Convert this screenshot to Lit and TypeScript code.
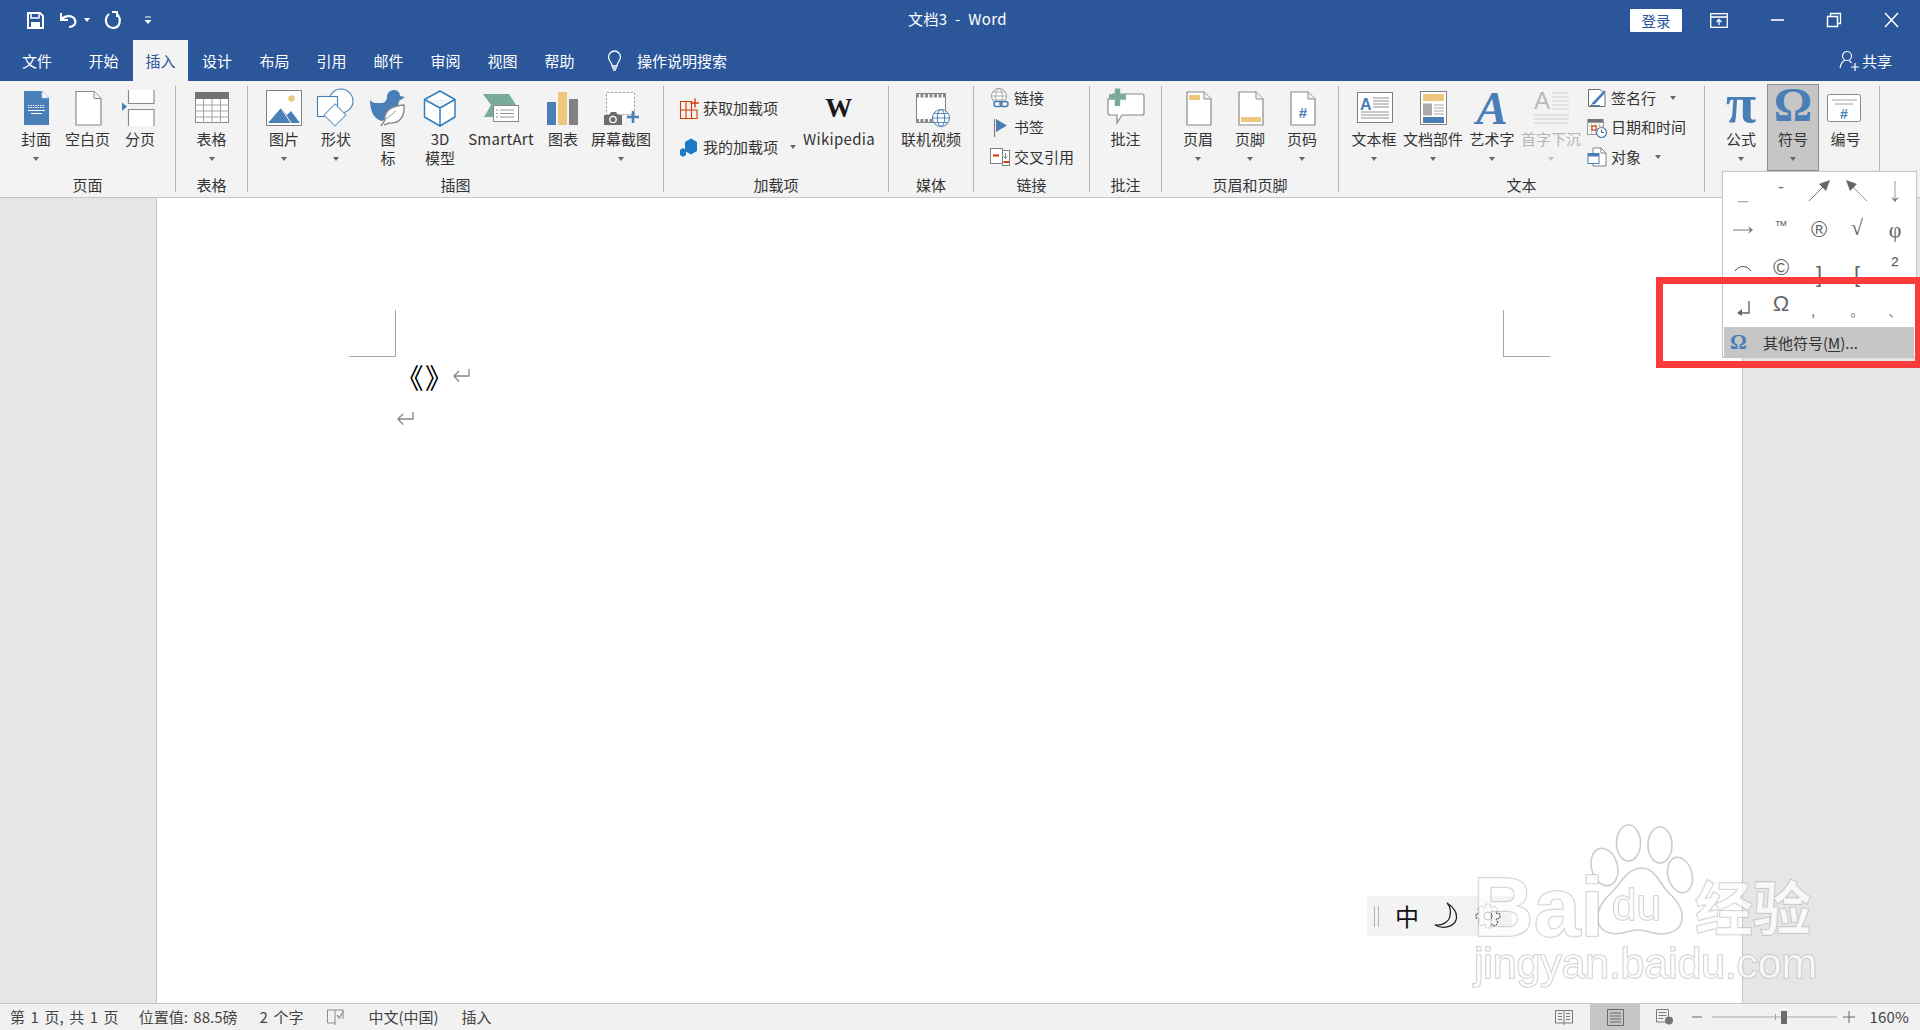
import { LitElement, html, css, svg } from "lit";
import { customElement } from "lit/decorators.js";

const B = "#4a7eb7", O = "#eec77e", G = "#808080", GR = "#7aab9a", R = "#d83b01";
const box = (c: any, w = 40, h = 40) => html`<svg class="ico" width=${w} height=${h} viewBox="0 0 ${w} ${h}">${c}</svg>`;
const page = (x: number, y: number, w: number, h: number) => svg`<path d="M${x} ${y}H${x + w - 7}L${x + w} ${y + 7}V${y + h}H${x}Z" fill="#fff" stroke="#8a8a8a" stroke-width="1.2"/><path d="M${x + w - 7} ${y}V${y + 7}H${x + w}" fill="#f3f3f3" stroke="#8a8a8a" stroke-width="1"/>`;

const I: Record<string, any> = {
  cover: box(svg`<path d="M8 3H26L33 10V37H8Z" fill="${B}"/><path d="M26 3V10H33Z" fill="#fff" stroke="#a8bfd8" stroke-width=".8"/><path d="M12 17.5H29M12 19.5H29" stroke="#fff" stroke-dasharray="1.4 1"/><path d="M12 22.5H29M15 25.5H26" stroke="#fff"/>`),
  blank: box(page(8, 3.5, 25, 33.5)),
  pbreak: box(svg`<path d="M8.5 2V15.5H34V2" fill="#fff" stroke="#8a8a8a" stroke-width="1.2"/><path d="M8.5 38V21.5H34V38" fill="#fff" stroke="#8a8a8a" stroke-width="1.2"/><path d="M2 14.5L7 18.5L2 23Z" fill="${B}"/>`),
  table: box(svg`<rect x="3.5" y="4.5" width="33" height="30" fill="#fff" stroke="#8a8a8a"/><rect x="3" y="4" width="34" height="7" fill="#737373"/><path d="M3 17H37M3 23H37M3 29H37M11.5 11V35M20 11V35M28.5 11V35" stroke="#a5a5a5"/>`),
  pic: box(svg`<rect x="2.5" y="2.5" width="35" height="35" fill="#fff" stroke="#808080"/><circle cx="27.5" cy="10.5" r="3.2" fill="${O}"/><path d="M4 35L17 20L23 27L27 23L36 35Z" fill="${B}"/><path d="M17 20L27 35" stroke="#fff"/>`),
  shapes: box(svg`<circle cx="25" cy="13" r="12" fill="#fff" stroke="${B}" stroke-width="1.1"/><rect x="1.5" y="8.5" width="20" height="20" fill="#fff" stroke="${B}" stroke-width="1.1"/><path d="M19 16L30 27L19 38L8 27Z" fill="#fff" stroke="#7aa0c8" stroke-width="1.1"/>`),
  icons: box(svg`<path d="M2 12C5 16 8 15 13 15C16 15 19 13 19 9C19 5 22 2 26 2C30 2 32 5 32 8L37 9L31 13C30 20 27 24 24 26C19 28 16 33 14 33C7 32 2 24 2 12Z" fill="${B}"/><path d="M13 38L17 32C16 23 23 18 36 17C37 28 32 36 21 35L16 37" fill="#fff" stroke="#8a8a8a" stroke-width="1.4"/><path d="M17 32L28 23" stroke="#a0a0a0"/>`),
  cube: box(svg`<path d="M20 3L35 11.5V29L20 38L4.5 29V11.5ZM4.5 11.5L20 20L35 11.5M20 20V38" fill="#fff" stroke="#2f7fc1" stroke-width="1.5" stroke-linejoin="round"/>`),
  smart: box(svg`<path d="M2 6H28L35 17L32 29H3L10 17Z" fill="${GR}"/><rect x="12.5" y="17.5" width="25" height="16" fill="#fff" stroke="#8a8a8a"/><path d="M19 22H33M19 25.5H33M19 29H33M15 22H17M15 25.5H17M15 29H17" stroke="#8a8a8a" stroke-width=".9"/>`),
  chart: box(svg`<rect x="4" y="14" width="9" height="23" fill="${B}"/><rect x="15" y="4" width="9" height="33" fill="${O}"/><rect x="26" y="11" width="9" height="26" fill="${G}"/>`),
  shot: box(svg`<rect x="5.5" y="4.5" width="28" height="22" fill="#fff" stroke="#a5a5a5" stroke-dasharray="2.5 1.5"/><path d="M3 27H8L10 24H15L17 27H21V37H3Z" fill="#6d6d6d"/><circle cx="12" cy="31.5" r="3.2" fill="none" stroke="#fff" stroke-width="1.3"/><path d="M26 29H38M32 23V35" stroke="${B}" stroke-width="2.6"/>`),
  film: box(svg`<rect x="5.5" y="5.5" width="29" height="29" fill="#fff" stroke="#808080"/><path d="M5 7.5H35M5 33H35" stroke="#8a8a8a" stroke-width="4" stroke-dasharray="3 1.5"/><circle cx="30" cy="30" r="8.5" fill="#fff" stroke="${B}"/><ellipse cx="30" cy="30" rx="3.7" ry="8.5" fill="none" stroke="${B}"/><path d="M21.5 30H38.5M23 25.5H37M23 34.5H37" stroke="${B}" stroke-width=".9"/>`),
  comment: box(svg`<path d="M6 6H36Q38 6 38 8V25Q38 27 36 27H16L11 35V27H4Q2 27 2 25V10" fill="#fff" stroke="#8a8a8a" stroke-width="1.2"/><path d="M3 9H20M11.5 0.5V18" stroke="${GR}" stroke-width="5.4"/>`),
  header: box(svg`${page(9, 4, 24, 33)}<rect x="11" y="7" width="11" height="5" fill="${O}"/>`),
  footer: box(svg`${page(9, 4, 24, 33)}<rect x="11" y="29" width="20" height="5" fill="${O}"/>`),
  pnum: box(svg`${page(9, 4, 24, 33)}<text x="21" y="30" class="t" font-size="15" text-anchor="middle" fill="${B}" font-weight="700">#</text>`),
  tbox: box(svg`<rect x="3.5" y="4.5" width="35" height="30" fill="#fff" stroke="#808080"/><text x="6" y="22" class="t" font-size="16" font-weight="700" fill="${B}">A</text><path d="M19 10H35M19 13H35M19 16H35M19 19H35M7 24H35M7 27H35M7 30H35" stroke="#8f8f8f"/>`),
  parts: box(svg`<rect x="7.5" y="3.5" width="26" height="33" fill="#fff" stroke="#808080"/><rect x="10" y="6" width="21" height="7" fill="${O}"/><rect x="10" y="15.5" width="9" height="12" fill="#aaa"/><path d="M21 17H31M21 20H31M21 23H31M21 26H31" stroke="#a5a5a5"/><rect x="10" y="29" width="21" height="6" fill="${B}"/>`),
  art: box(svg`<text x="20" y="36" class="s" font-size="47" font-weight="700" font-style="italic" text-anchor="middle" fill="${B}">A</text>`),
  drop: box(svg`<text x="3" y="21" class="t" font-size="24" fill="#b8b8b8">A</text><path d="M21 5H38M21 9H38M21 13H38M21 17H38M21 21H38" stroke="#d2d2d2"/><path d="M3 27H38M3 31H38M3 35H38" stroke="#cfcfcf"/>`),
  pi: box(svg`<text x="20" y="34" class="s" font-size="55" font-weight="700" text-anchor="middle" fill="${B}">π</text>`),
  om: box(svg`<text x="20" y="33" class="s" font-size="48" font-weight="700" text-anchor="middle" fill="${B}">Ω</text>`),
  num: box(svg`<rect x="1.5" y="6.5" width="33" height="27" rx="2" fill="#fff" stroke="#8a8a8a"/><path d="M6 12H31M9 16H27" stroke="#a0a0a0"/><text x="18" y="31" class="t" font-size="14" font-weight="700" text-anchor="middle" fill="${B}">#</text>`),
  addin: box(svg`<path d="M1.5 3.5H12.5V20.5H1.5ZM1.5 12H18V20.5H12.5M7 3.5V20.5" fill="none" stroke="${R}" stroke-width="1.1"/><path d="M11.5 5H20M16 0.5V9.5" stroke="${R}" stroke-width="1.4"/>`, 20, 20),
  myadd: box(svg`<path d="M6 5L12 1.5L18 5V14L12 17.5L6 14Z" fill="#1f78c8"/><path d="M1 13L4 11L7 13V18L4 20L1 18Z" fill="#1f78c8"/>`, 20, 20),
  link: box(svg`<circle cx="9" cy="8" r="7.5" fill="#fff" stroke="#9a9a9a"/><ellipse cx="9" cy="8" rx="3.4" ry="7.5" fill="none" stroke="#9a9a9a" stroke-width=".8"/><path d="M1.5 8H16.5M3 4H15M3 12H15" stroke="#9a9a9a" stroke-width=".8"/><rect x="4" y="13.5" width="8" height="5" rx="2.5" fill="#fff" stroke="${B}" stroke-width="1.5"/><rect x="10" y="13.5" width="8" height="5" rx="2.5" fill="none" stroke="${B}" stroke-width="1.5"/>`, 20, 20),
  mark: box(svg`<path d="M4.5 1V19" stroke="#808080" stroke-width="1.2"/><path d="M6 1L17 7.5L6 14Z" fill="${B}"/>`, 20, 20),
  xref: box(svg`<rect x="0.5" y="1.5" width="12" height="15" fill="#fff" stroke="#808080"/><rect x="12.5" y="3.5" width="7" height="15" fill="#fff" stroke="#808080"/><path d="M3 8.5H9M13.5 15H19" stroke="${R}" stroke-width="2"/><path d="M15.5 6V11M13.5 9.5L15.5 11.5L17.5 9.5" fill="none" stroke="#808080"/>`, 20, 20),
  sig: box(svg`<path d="M1.5 1.5H13L18 6V18.5H1.5Z" fill="#fff" stroke="#6f6f6f"/><path d="M5 15L17 2.5L19 4L8 16L4 17Z" fill="${B}"/><path d="M3 17.5H13" stroke="${B}"/>`, 20, 20),
  date: box(svg`<rect x="0.5" y="1" width="16" height="3.5" fill="#737373"/><rect x="0.5" y="4.5" width="16" height="12" fill="#fff" stroke="#999"/><path d="M4.5 4.5V16M8.5 4.5V16M12.5 4.5V16M.5 8H16M.5 12H16" stroke="#bbb" stroke-width=".8"/><rect x="5" y="8" width="4" height="4" fill="#fff" stroke="${R}" stroke-width="1.2"/><circle cx="14.5" cy="14.5" r="5" fill="#fff" stroke="${B}" stroke-width="1.2"/><path d="M14.5 11.5V14.5H17" fill="none" stroke="#555"/>`, 20, 20),
  obj: box(svg`<path d="M6 1H14L19 6V19H6Z" fill="#fff" stroke="#808080"/><path d="M14 1V6H19" fill="none" stroke="#808080"/><rect x="1" y="6.5" width="11" height="10" fill="#fff" stroke="${B}"/><rect x="1" y="6.5" width="11" height="3" fill="${B}"/>`, 20, 20),
};

const Btn = (icon: any, label: string, w: number, arrow = true, line2 = "", cls = "") => html`
  <div class="btn ${cls}" style="width:${w}px">${icon}<div class="lb">${label}</div>${line2 ? html`<div class="lb">${line2}</div>` : ""}${arrow ? html`<i class="ar"></i>` : ""}</div>`;
const Grp = (w: number, label: string, content: any) => html`
  <section class="grp" style="width:${w}px"><div class="gc">${content}</div><div class="gl">${label}</div></section>`;
const Row = (ic: any, t: string, arrow = false, cls = "") => html`<div class="row ${cls}">${ic}<span>${t}</span>${arrow ? html`<i class="ar"></i>` : ""}</div>`;

const tabs: [string, number][] = [["文件", 74], ["开始", 59], ["插入", 55], ["设计", 58], ["布局", 57], ["引用", 57], ["邮件", 57], ["审阅", 57], ["视图", 57], ["帮助", 57]];
const A = (c: any) => html`<svg width="30" height="30" viewBox="0 0 30 30" fill="none" stroke="#777" stroke-width="1">${c}</svg>`;
const cells: any[] = [
  html`<span class="lo">_</span>`, html`<span class="mi">-</span>`,
  A(svg`<path d="M5 25L22 8"/><path d="M15 8L26 4L22 15Z" fill="#666" stroke="none"/>`),
  A(svg`<path d="M25 25L8 8" stroke="#999"/><path d="M4 4L15 8L8 15Z" fill="#666" stroke="none"/>`),
  A(svg`<path d="M15 5V25" stroke="#999"/><path d="M11 21L15 26L19 21L15 23Z" fill="#777" stroke="none"/>`),
  A(svg`<path d="M5 15H24"/><path d="M20 11L25 15L20 19L22 15Z" fill="#777" stroke="none"/>`), html`<span class="sm">™</span>`, html`<span class="rc">®</span>`, html`<span class="rt">√</span>`, html`<span class="ph">φ</span>`,
  A(svg`<path d="M7 18C11 12 19 12 23 18" stroke="#555"/>`), html`<span class="rc">©</span>`, html`<span class="br">]</span>`, html`<span class="br">[</span>`, html`<span class="sm2">²</span>`,
  A(svg`<path d="M21 9V21H11" stroke="#666" stroke-width="1.4"/><path d="M14 17L9 21L14 24Z" fill="#666" stroke="none"/>`), html`<span class="om">Ω</span>`, html`<span class="pc cm">,</span>`, html`<span class="pc">。</span>`, html`<span class="pc">、</span>`,
];
const Ret = () => html`<svg class="ret" width="17" height="14" viewBox="0 0 17 14" fill="none" stroke="#888" stroke-width="1.3">${svg`<path d="M16 0V7H1M6 2L1 7L6 12.5"/>`}</svg>`;

@customElement("app-root")
export class AppRoot extends LitElement {
  static styles = css`
    :host { display: block; width: 1920px; height: 1030px; position: relative; overflow: hidden; font-family: "Noto Sans CJK SC", "Liberation Sans", sans-serif; font-size: 15px; color: #333; background: #e6e6e6; }
    .t { font-family: "Liberation Sans", sans-serif; }
    .s { font-family: "Liberation Serif", serif; }
    .title { height: 40px; background: #2b579a; color: #fff; display: grid; grid-template-columns: 1fr auto 1fr; align-items: center; }
    .qat { display: flex; align-items: center; padding-left: 25px; }
    .qat svg { display: block; }
    .qat .q2 { margin-left: 13px; } .qat .q3 { margin-left: 6px; } .qat .q4 { margin-left: 13px; } .qat .q5 { margin-left: 20px; }
    .ttl { font-size: 15px; letter-spacing: .4px; white-space: pre; margin-right: 5px; padding-bottom: 4px; }
    .wc { display: flex; align-items: center; justify-content: flex-end; }
    .login { width: 52px; height: 23px; background: #fff; color: #2b579a; border-radius: 1px; display: flex; align-items: center; justify-content: center; font-size: 14.5px; margin-right: 27px; }
    .wc svg { display: block; }
    .wc .m1 { margin-right: 40.5px; } .wc .m2 { margin-right: 41.5px; } .wc .m3 { margin-right: 39.5px; } .wc .m4 { margin-right: 19.5px; }
    .tabs { height: 41px; background: #2b579a; color: #fff; display: flex; }
    .tab { display: flex; align-items: center; justify-content: center; }
    .tab.on { background: #f3f3f3; color: #2b579a; }
    .tell { display: flex; align-items: center; margin-left: 17px; flex: 1; }
    .tell span { margin-left: 13px; }
    .share { display: flex; align-items: center; margin-right: 28px; }
    .share span { margin-left: 2px; }
    .ribbon { height: 116px; background: #f3f3f3; border-bottom: 1px solid #c6c6c6; display: flex; box-sizing: content-box; color: #333; }
    .grp { height: 106px; margin-top: 5px; border-right: 1px solid #b4b4b4; box-sizing: border-box; display: flex; flex-direction: column; padding-top: 2px; }
    .gc { flex: 1; display: flex; min-height: 0; }
    .gl { height: 20px; line-height: 20px; text-align: center; margin-bottom: -3px; white-space: nowrap; }
    .btn { display: flex; flex-direction: column; align-items: center; flex: none; box-sizing: border-box; }
    .ico { display: block; flex: none; overflow: visible; }
    .lb { height: 19px; line-height: 19px; margin-top: .5px; white-space: nowrap; }
    .lb + .lb { margin-top: 0; }
    .ar { display: block; width: 0; height: 0; border: 3.5px solid transparent; border-top: 4px solid #666; border-bottom: 0; margin-top: 9.5px; flex: none; }
    .dis { color: #b5b5b5; } .dis .ar { border-top-color: #c2c2c2; }
    .act { background: #c6c6c6; outline: 1px solid #8e8e8e; outline-offset: -1px; margin-top: -4px; padding-top: 4px; height: 87px; }
    .pl10 { padding-left: 10px; } .pl9 { padding-left: 9px; } .pl15 { padding-left: 15px; width: 139px; flex: none; box-sizing: border-box; } .pl16 { padding-left: 16px; }
    .col { display: flex; flex-direction: column; flex: none; }
    .r3 { gap: 9.5px; }
    .row { display: flex; align-items: center; height: 20px; white-space: nowrap; }
    .row span { margin-left: 4px; margin-top: -2px; }
    .row .ar { margin: 0 0 0 14px; }
    .mya .ar { margin-left: 12px; }
    .add { margin-top: 10px; gap: 19px; }
    .wp { font-family: "Liberation Serif", serif; font-weight: 700; font-size: 27px; line-height: 40px; color: #1a1a1a; height: 40px; }
    .en { letter-spacing: .3px; }
    .stack { padding-left: 3px; }
    .main { height: 805px; display: flex; }
    .side { width: 156px; background: #e6e6e6; flex: none; }
    .sheet { width: 1587px; flex: none; background: #fff; border-left: 1px solid #c6c6c6; border-right: 1px solid #c6c6c6; box-sizing: border-box; padding: 112px 192px 0 191.5px; }
    .side2 { flex: 1; background: #e6e6e6; }
    .marks { display: flex; justify-content: space-between; }
    .mk { width: 47px; height: 47px; border-bottom: 1.5px solid #a6a6a6; box-sizing: border-box; }
    .mk.l { border-right: 1.5px solid #a6a6a6; } .mk.r { border-left: 1.5px solid #a6a6a6; }
    .p1 { padding-left: 47px; height: 44px; margin-top: -2px; display: flex; align-items: center; font-size: 28px; color: #000; line-height: 44px; letter-spacing: 1.5px; }
    .ret { display: block; flex: none; }
    .p1 .ret { margin: -2px 0 0 -2px; }
    .p2 { padding-left: 48px; height: 22px; margin-top: 8.5px; display: flex; align-items: center; }
    .status { height: 27px; background: #f1f1f1; border-top: 1px solid #c6c6c6; box-sizing: border-box; display: flex; align-items: center; font-size: 15px; color: #444; position: relative; }
    .st { padding-left: 10px; white-space: pre; flex: none; word-spacing: 2.2px; margin-top: -2px; }
    .st2, .st3, .st5, .st6 { word-spacing: 2.2px; margin-top: -2px; flex: none; white-space: pre; }
    .st2 { margin-left: 20px; } .st3 { margin-left: 22px; } .st4 { margin-left: 24px; } .st5 { margin-left: 23px; } .st6 { margin-left: 23px; }
    .sr { margin-left: auto; display: flex; align-items: center; height: 100%; }
    .sr svg { display: block; }
    .view { width: 50px; height: 100%; display: flex; align-items: center; justify-content: center; }
    .view.on { background: #c6c6c6; }
    .slider { display: flex; align-items: center; margin: 0 4px; width: 125px; height: 100%; }
    .pct { margin-left: 14px; margin-right: 11px; letter-spacing: .2px; margin-top: -2px; }
    .drop { position: absolute; left: 1722px; top: 171px; width: 195px; height: 187px; background: #fff; border: 1px solid #c6c6c6; box-sizing: border-box; box-shadow: 0 0 2px rgba(0,0,0,.08); }
    .grid { display: grid; grid-template-columns: repeat(5, 38px); grid-auto-rows: 38.5px; padding: 0 0 0 1px; height: 154px; color: #666; font-family: "Liberation Sans", sans-serif; font-size: 19px; overflow: hidden; }
    .grid > div { display: flex; align-items: center; justify-content: center; }
    .lo { font-size: 18px; margin-top: 2px; color: #aaa; } .mi { margin-top: -8px; color: #777; }
    .sm { font-size: 13px; margin-top: -9px; } .sm2 { font-size: 22px; margin-top: -6px; }
    .rc { font-size: 22px; font-weight: 400; }
    .rt { font-size: 22px; margin-top: -4px; font-family: "Liberation Serif", serif; } .ph { font-family: "Liberation Serif", serif; font-size: 22px; }
    .br { font-size: 22px; margin-top: 14px; } .om { font-size: 22px; font-family: "Liberation Sans", sans-serif; margin-top: -5px; }
    .pc { font-size: 13px; margin-top: 8px; font-family: "Noto Sans CJK SC", sans-serif; color: #777; }
    .cm { margin-right: 12px; }
    .more { height: 30px; margin: 1px 0 0 1px; width: 190px; background: #c6c6c6; display: flex; align-items: center; font-size: 15px; color: #333; }
    .more .o { font-family: "Liberation Serif", serif; font-weight: 700; font-size: 21px; color: #4a7eb7; width: 39px; padding-left: 6px; box-sizing: border-box; flex: none; }
    .more u { text-underline-offset: 2px; }
    .red { position: absolute; left: 1656px; top: 277px; width: 266px; height: 91px; border: 7px solid #fb3a3a; box-sizing: border-box; pointer-events: none; }
    .ime { position: absolute; left: 1367px; top: 896px; width: 145px; height: 40px; background: #f3f3f3; display: flex; align-items: center; }
    .ime .bar { width: 5px; height: 21px; border-left: 1.5px solid #b5b5b5; border-right: 1.5px solid #b5b5b5; box-sizing: border-box; margin-left: 7px; flex: none; }
    .ime .zh { font-size: 24px; color: #111; margin-left: 16px; line-height: 40px; flex: none; }
    .ime svg { display: block; flex: none; }
    .ime .mn { margin-left: 14px; } .ime .gr { margin-left: 14px; }
    .wm { position: absolute; color: rgba(255,255,255,.72); -webkit-text-stroke: 1.6px rgba(175,175,175,.62); font-family: "Liberation Sans", sans-serif; font-weight: 700; white-space: pre; line-height: 1; filter: blur(.5px); paint-order: stroke fill; }
    .wm.bai { left: 1473px; top: 865px; font-size: 84px; }
    .wm.du { left: 1612px; top: 883px; font-size: 44px; font-weight: 400; }
    .wm.jy { left: 1695px; top: 876px; font-size: 58px; font-family: "Noto Sans CJK SC", sans-serif; }
    .wm.url { left: 1474px; top: 942px; font-size: 43px; font-weight: 400; letter-spacing: -.2px; }
    .paw { position: absolute; left: 1590px; top: 820px; filter: blur(.5px); }
  `;

  render() {
    const W = (c: any, w = 20, h = 20, cls = "") => html`<svg class=${cls} width=${w} height=${h} viewBox="0 0 ${w} ${h}" fill="none" stroke="#fff" stroke-width="1.5">${c}</svg>`;
    return html`
      <div class="title">
        <div class="qat">
          ${W(svg`<path d="M3 3H15L18 6V18H3Z" stroke-width="2"/><path d="M6 3V8H14V3" stroke-width="1.5"/><rect x="6" y="12" width="9" height="6" fill="#fff" stroke="none"/>`)}
          ${W(svg`<path d="M3 3V10H10" stroke-width="2"/><path d="M3.5 9.5C7 5 15 5 17 10C18.5 14 15 17 11 17" stroke-width="2.2"/>`, 20, 20, "q2")}
          <i class="q3" style="display:block;border:3px solid transparent;border-top:4px solid #fff;border-bottom:0"></i>
          ${W(svg`<path d="M6 4C1 8 2 17 10 18C17 18 19 9 14 4" stroke-width="2.2"/><path d="M9 2H14V7" stroke-width="2"/>`, 20, 20, "q4")}
          ${W(svg`<path d="M2 3H8" stroke-width="1"/><path d="M1.5 6H8.5L5 10Z" fill="#fff" stroke="none"/>`, 10, 12, "q5")}
        </div>
        <div class="ttl">文档3  -  Word</div>
        <div class="wc">
          <div class="login">登录</div>
          ${W(svg`<rect x="1.7" y="3.7" width="16.6" height="13.6" stroke-width="1.3"/><path d="M2 7H18" stroke-width="1.6"/><path d="M10 15V9.5M7.5 12L10 9.5L12.5 12" stroke-width="1.3"/>`, 20, 20, "m1")}
          ${W(svg`<path d="M1 10H14" stroke-width="1.6"/>`, 15, 20, "m2")}
          ${W(svg`<rect x="1.5" y="5.5" width="10" height="10"/><path d="M4.5 5V2.5H14.5V12.5H12" stroke-width="1.3"/>`, 16, 18, "m3")}
          ${W(svg`<path d="M3 3L16 17M16 3L3 17" stroke-width="1.5"/>`, 19, 20, "m4")}
        </div>
      </div>
      <div class="tabs">
        ${tabs.map(([t, w]) => html`<div class="tab ${t === "插入" ? "on" : ""}" style="width:${w}px">${t}</div>`)}
        <div class="tell">
          ${W(svg`<path d="M7 16C7 12 3.5 11 3.5 7C3.5 3.5 6.5 1 9.5 1C12.5 1 15.5 3.5 15.5 7C15.5 11 12 12 12 16ZM7 18H12M8 20H11" stroke-width="1.3"/>`, 19, 22)}
          <span>操作说明搜索</span>
        </div>
        <div class="share">
          ${W(svg`<circle cx="8" cy="6" r="4.5" stroke-width="1.2"/><path d="M1 18C2 13 4 11 6 10M10 10.5C11 11 12 12 12.5 13M12 17H20M16 13V21" stroke-width="1.2"/>`, 21, 22)}
          <span>共享</span>
        </div>
      </div>
      <div class="ribbon">
        ${Grp(176, "页面", html`<div class="gc pl10">${Btn(I.cover, "封面", 52)}${Btn(I.blank, "空白页", 51, false)}${Btn(I.pbreak, "分页", 54, false)}</div>`)}
        ${Grp(72, "表格", Btn(I.table, "表格", 71))}
        ${Grp(416, "插图", html`<div class="gc pl10">${Btn(I.pic, "图片", 52)}${Btn(I.shapes, "形状", 52)}${Btn(I.icons, "图", 52, false, "标")}${Btn(I.cube, "3D", 52, false, "模型")}${Btn(I.smart, "SmartArt", 70, false, "", "en")}${Btn(I.chart, "图表", 54, false)}${Btn(I.shot, "屏幕截图", 62)}</div>`)}
        ${Grp(225, "加载项", html`<div class="col pl15 add">${Row(I.addin, "获取加载项")}${Row(I.myadd, "我的加载项", true, "mya")}</div>${Btn(html`<div class="wp">W</div>`, "Wikipedia", 72, false, "", "en")}`)}
        ${Grp(85, "媒体", Btn(I.film, "联机视频", 84, false))}
        ${Grp(116, "链接", html`<div class="col r3 pl16">${Row(I.link, "链接")}${Row(I.mark, "书签")}${Row(I.xref, "交叉引用")}</div>`)}
        ${Grp(72, "批注", Btn(I.comment, "批注", 71, false))}
        ${Grp(177, "页眉和页脚", html`<div class="gc pl10">${Btn(I.header, "页眉", 52)}${Btn(I.footer, "页脚", 52)}${Btn(I.pnum, "页码", 52)}</div>`)}
        ${Grp(366, "文本", html`<div class="gc pl9">${Btn(I.tbox, "文本框", 52)}${Btn(I.parts, "文档部件", 66)}${Btn(I.art, "艺术字", 52)}${Btn(I.drop, "首字下沉", 66, true, "", "dis")}<div class="col r3 stack">${Row(I.sig, "签名行", true)}${Row(I.date, "日期和时间")}${Row(I.obj, "对象", true)}</div></div>`)}
        ${Grp(175, "", html`<div class="gc pl10">${Btn(I.pi, "公式", 52)}${Btn(I.om, "符号", 52, true, "", "act")}${Btn(I.num, "编号", 53, false)}</div>`)}
      </div>
      <div class="main">
        <div class="side"></div>
        <div class="sheet">
          <div class="marks"><div class="mk l"></div><div class="mk r"></div></div>
          <div class="p1">《》${Ret()}</div>
          <div class="p2">${Ret()}</div>
        </div>
        <div class="side2"></div>
      </div>
      <div class="status">
        <div class="st">第 1 页, 共 1 页</div><div class="st2">位置值: 88.5磅</div><div class="st3">2 个字</div>
        <svg class="st4" width="18" height="16" viewBox="0 0 18 16" fill="none" stroke="#8a8a8a">${svg`<path d="M.5 1H8V14H.5ZM8 1H16V10M8 14L8 16"/><path d="M10 6L12 9L17 2" stroke="#999" stroke-width="1.4"/>`}</svg>
        <div class="st5">中文(中国)</div><div class="st6">插入</div>
        <div class="sr">
          <svg width="18" height="16" viewBox="0 0 18 16" fill="none" stroke="#7a7a7a" style="margin-right:17px">${svg`<path d="M.5 1.5H17.5V14H.5ZM9 1.5V16M3 4.5H7M3 7.5H7M3 10.5H7M11 4.5H15M11 7.5H15M11 10.5H15"/>`}</svg>
          <div class="view on"><svg width="17" height="17" viewBox="0 0 17 17" fill="none" stroke="#6a6a6a">${svg`<path d="M.5 .5H16.5V16.5H.5ZM3 4H14M3 7H14M3 10H14M3 13H14"/>`}</svg></div>
          <svg width="18" height="16" viewBox="0 0 18 16" fill="none" stroke="#7a7a7a" style="margin:0 18px 0 16px">${svg`<path d="M.5 .5H12.5V13H.5ZM2.5 3.5H10.5M2.5 6.5H10.5M2.5 9.5H7"/><circle cx="13" cy="11.5" r="4" fill="#777" stroke="none"/>`}</svg>
          <svg width="10" height="10" viewBox="0 0 10 10" stroke="#666" style="margin-right:6px">${svg`<path d="M0 5H10"/>`}</svg>
          <div class="slider"><svg width="125" height="16" viewBox="0 0 125 16">${svg`<path d="M0 8H125" stroke="#a6a6a6"/><path d="M63.5 5V11" stroke="#a6a6a6"/><rect x="69" y="2" width="6" height="13" fill="#6a6a6a"/>`}</svg></div>
          <svg width="12" height="12" viewBox="0 0 12 12" stroke="#666" style="margin-left:2px">${svg`<path d="M0 6H12M6 0V12"/>`}</svg>
          <div class="pct">160%</div>
        </div>
      </div>
      <div class="drop">
        <div class="grid">${cells.map((c) => html`<div>${c}</div>`)}</div>
        <div class="more"><span class="o">Ω</span><span>其他符号(<u>M</u>)...</span></div>
      </div>
      <div class="red"></div>
      <div class="ime">
        <div class="bar"></div>
        <div class="zh">中</div>
        <svg class="mn" width="28" height="28" viewBox="0 0 28 28" fill="none" stroke="#222" stroke-width="1.3">${svg`<path d="M14 1C21 5 25 12 23 18C21 24 11 28 2 23C9 24 16 20 17 14C18 9 17 4 14 1Z"/>`}</svg>
        <svg class="gr" width="26" height="26" viewBox="0 0 26 26" fill="none" stroke="#333" stroke-width="1">${svg`<path d="M11 1H15L16 5L20 3L23 6L21 10L25 11V15L21 16L23 20L20 23L16 21L15 25H11L10 21L6 23L3 20L5 16L1 15V11L5 10L3 6L6 3L10 5Z" stroke-dasharray="2 1"/><circle cx="13" cy="13" r="4"/>`}</svg>
      </div>
      <svg class="paw" width="110" height="125" viewBox="0 0 110 125" fill="rgba(255,255,255,.72)" stroke="rgba(175,175,175,.62)" stroke-width="1.6">
        ${svg`<ellipse cx="14.5" cy="47" rx="13" ry="19" transform="rotate(-15 14.5 47)"/><ellipse cx="38.5" cy="23" rx="12" ry="18"/><ellipse cx="70" cy="25" rx="12" ry="18" /><ellipse cx="90" cy="55" rx="12" ry="18" transform="rotate(-15 90 55)"/><path d="M52 48C66 48 70 66 82 76C96 90 98 112 72 114C62 114 56 110 48 110C38 110 30 116 20 113C2 108 6 88 18 76C30 66 36 48 52 48Z"/>`}
      </svg>
      <div class="wm bai">Bai</div>
      <div class="wm du">du</div>
      <div class="wm jy">经验</div>
      <div class="wm url">jingyan.baidu.com</div>
    `;
  }
}
